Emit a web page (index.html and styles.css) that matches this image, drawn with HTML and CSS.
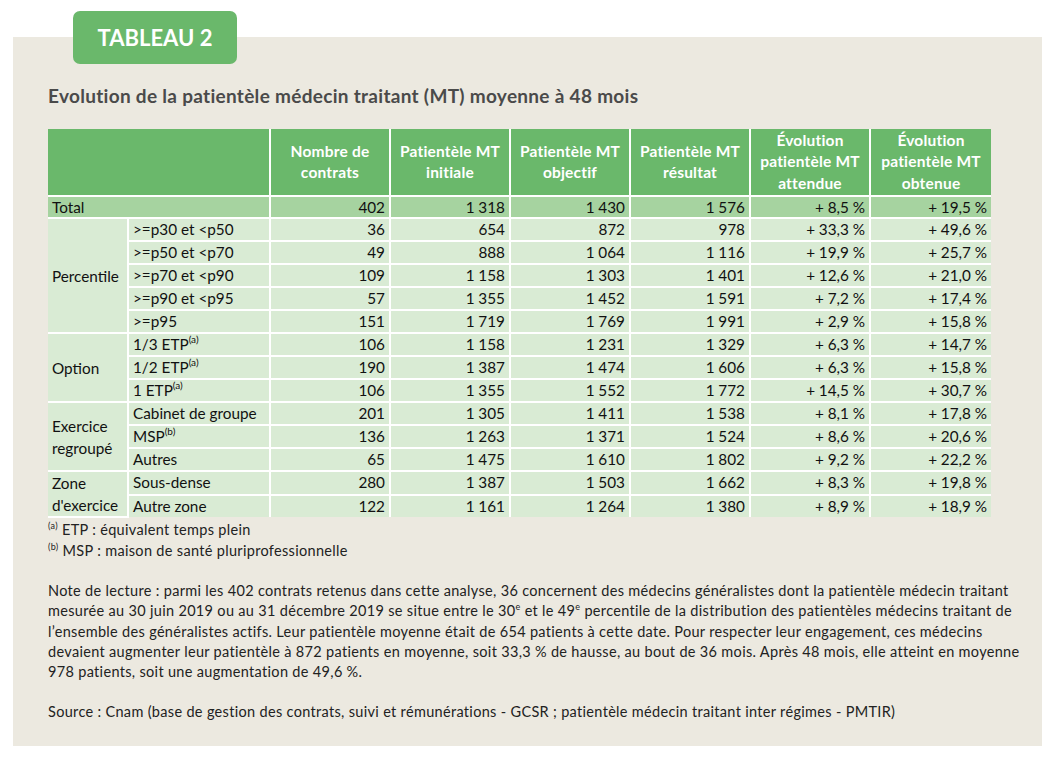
FILE: index.html
```html
<!DOCTYPE html>
<html lang="fr">
<head>
<meta charset="utf-8">
<title>Tableau 2</title>
<link rel="stylesheet" href="styles.css">
</head>
<body>
<div class="panel">
  <div class="tab">TABLEAU 2</div>
  <h1 class="title">Evolution de la patientèle médecin traitant (MT) moyenne à 48 mois</h1>
  <table class="data">
    <colgroup>
      <col class="c1"><col class="c2"><col class="cn"><col class="cn"><col class="cn"><col class="cn"><col class="cn"><col class="c8">
    </colgroup>
    <thead>
      <tr>
        <th colspan="2"></th>
        <th>Nombre de<br>contrats</th>
        <th>Patientèle MT<br>initiale</th>
        <th>Patientèle MT<br>objectif</th>
        <th>Patientèle MT<br>résultat</th>
        <th>Évolution<br>patientèle MT<br>attendue</th>
        <th>Évolution<br>patientèle MT<br>obtenue</th>
      </tr>
    </thead>
    <tbody>
      <tr class="total">
        <td colspan="2" class="lbl">Total</td>
        <td>402</td><td>1&#8239;318</td><td>1&#8239;430</td><td>1&#8239;576</td><td>+&#8239;8,5&#8239;%</td><td>+&#8239;19,5&#8239;%</td>
      </tr>
      <tr>
        <td rowspan="5" class="grp">Percentile</td>
        <td class="lbl">&gt;=p30 et &lt;p50</td>
        <td>36</td><td>654</td><td>872</td><td>978</td><td>+&#8239;33,3&#8239;%</td><td>+&#8239;49,6&#8239;%</td>
      </tr>
      <tr>
        <td class="lbl">&gt;=p50 et &lt;p70</td>
        <td>49</td><td>888</td><td>1&#8239;064</td><td>1&#8239;116</td><td>+&#8239;19,9&#8239;%</td><td>+&#8239;25,7&#8239;%</td>
      </tr>
      <tr>
        <td class="lbl">&gt;=p70 et &lt;p90</td>
        <td>109</td><td>1&#8239;158</td><td>1&#8239;303</td><td>1&#8239;401</td><td>+&#8239;12,6&#8239;%</td><td>+&#8239;21,0&#8239;%</td>
      </tr>
      <tr>
        <td class="lbl">&gt;=p90 et &lt;p95</td>
        <td>57</td><td>1&#8239;355</td><td>1&#8239;452</td><td>1&#8239;591</td><td>+&#8239;7,2&#8239;%</td><td>+&#8239;17,4&#8239;%</td>
      </tr>
      <tr>
        <td class="lbl">&gt;=p95</td>
        <td>151</td><td>1&#8239;719</td><td>1&#8239;769</td><td>1&#8239;991</td><td>+&#8239;2,9&#8239;%</td><td>+&#8239;15,8&#8239;%</td>
      </tr>
      <tr>
        <td rowspan="3" class="grp">Option</td>
        <td class="lbl">1/3 ETP<sup>(a)</sup></td>
        <td>106</td><td>1&#8239;158</td><td>1&#8239;231</td><td>1&#8239;329</td><td>+&#8239;6,3&#8239;%</td><td>+&#8239;14,7&#8239;%</td>
      </tr>
      <tr>
        <td class="lbl">1/2 ETP<sup>(a)</sup></td>
        <td>190</td><td>1&#8239;387</td><td>1&#8239;474</td><td>1&#8239;606</td><td>+&#8239;6,3&#8239;%</td><td>+&#8239;15,8&#8239;%</td>
      </tr>
      <tr>
        <td class="lbl">1 ETP<sup>(a)</sup></td>
        <td>106</td><td>1&#8239;355</td><td>1&#8239;552</td><td>1&#8239;772</td><td>+&#8239;14,5&#8239;%</td><td>+&#8239;30,7&#8239;%</td>
      </tr>
      <tr>
        <td rowspan="3" class="grp">Exercice regroupé</td>
        <td class="lbl">Cabinet de groupe</td>
        <td>201</td><td>1&#8239;305</td><td>1&#8239;411</td><td>1&#8239;538</td><td>+&#8239;8,1&#8239;%</td><td>+&#8239;17,8&#8239;%</td>
      </tr>
      <tr>
        <td class="lbl">MSP<sup>(b)</sup></td>
        <td>136</td><td>1&#8239;263</td><td>1&#8239;371</td><td>1&#8239;524</td><td>+&#8239;8,6&#8239;%</td><td>+&#8239;20,6&#8239;%</td>
      </tr>
      <tr>
        <td class="lbl">Autres</td>
        <td>65</td><td>1&#8239;475</td><td>1&#8239;610</td><td>1&#8239;802</td><td>+&#8239;9,2&#8239;%</td><td>+&#8239;22,2&#8239;%</td>
      </tr>
      <tr>
        <td rowspan="2" class="grp">Zone d'exercice</td>
        <td class="lbl">Sous-dense</td>
        <td>280</td><td>1&#8239;387</td><td>1&#8239;503</td><td>1&#8239;662</td><td>+&#8239;8,3&#8239;%</td><td>+&#8239;19,8&#8239;%</td>
      </tr>
      <tr>
        <td class="lbl">Autre zone</td>
        <td>122</td><td>1&#8239;161</td><td>1&#8239;264</td><td>1&#8239;380</td><td>+&#8239;8,9&#8239;%</td><td>+&#8239;18,9&#8239;%</td>
      </tr>
    </tbody>
  </table>
  <div class="notes">
    <p><sup>(a)</sup> ETP : équivalent temps plein</p>
    <p><sup>(b)</sup> MSP : maison de santé pluriprofessionnelle</p>
  </div>
  <p class="reading">Note de lecture : parmi les 402 contrats retenus dans cette analyse, 36 concernent des médecins généralistes dont la patientèle médecin traitant<br>mesurée au 30 juin 2019 ou au 31 décembre 2019 se situe entre le 30<sup>e</sup> et le 49<sup>e</sup> percentile de la distribution des patientèles médecins traitant de<br>l’ensemble des généralistes actifs. Leur patientèle moyenne était de 654 patients à cette date. Pour respecter leur engagement, ces médecins<br>devaient augmenter leur patientèle à 872 patients en moyenne, soit 33,3&#8239;% de hausse, au bout de 36 mois. Après 48 mois, elle atteint en moyenne<br>978 patients, soit une augmentation de 49,6&#8239;%.</p>
  <p class="source">Source : Cnam (base de gestion des contrats, suivi et rémunérations - GCSR ; patientèle médecin traitant inter régimes - PMTIR)</p>
</div>
</body>
</html>
```

FILE: styles.css
```css
html, body {
  margin: 0;
  padding: 0;
  background: #ffffff;
}

body {
  font-family: Lato, "Liberation Sans", sans-serif;
  color: #222;
}

.panel {
  position: relative;
  box-sizing: border-box;
  margin: 37px 0 0 13px;
  width: 1029px;
  height: 709px;
  background: #ece9e0;
  padding: 48px 0 0 35px;
}

.tab {
  position: absolute;
  left: 60px;
  top: -26px;
  width: 164px;
  height: 53px;
  border-radius: 7px;
  background: #6ab86b;
  color: #fff;
  font-weight: 700;
  font-size: 22px;
  display: flex;
  align-items: center;
  justify-content: center;
}

.title {
  margin: 0 0 22px;
  font-size: 19px;
  line-height: 22px;
  letter-spacing: 0.3px;
  font-weight: 700;
  color: #4a4a4a;
}

.data {
  width: 943px;
  table-layout: fixed;
  border-collapse: collapse;
  font-size: 15.3px;
  color: #111;
}

.c1 { width: 80px; }
.c2 { width: 142px; }
.cn { width: 120px; }
.c8 { width: 121px; }

.data th,
.data td {
  border: 2px solid #fff;
  padding: 0 4px;
}

.data tr > :first-child { border-left: none; }
.data tr > :last-child { border-right: none; }
.data thead th { border-top: none; }
.data tbody tr:last-child td { border-bottom: none; }

.data th {
  background: #6ab86b;
  color: #fff;
  font-weight: 700;
  font-size: 15.5px;
  letter-spacing: 0.2px;
  height: 66px;
  line-height: 21.5px;
  text-align: center;
  vertical-align: middle;
  padding: 0 2px;
}

.data td {
  background: #d9ebd4;
  height: 21px;
  line-height: 21px;
  text-align: right;
  white-space: nowrap;
}

.data tr.total td {
  background: #a6d3a0;
  height: 20px;
  line-height: 20px;
}

.data td.lbl,
.data td.grp {
  text-align: left;
}

.data td.grp {
  white-space: normal;
  vertical-align: middle;
  line-height: 22px;
}

.data tbody tr:last-child td.grp {
  vertical-align: top;
}

sup {
  font-size: 9px;
  line-height: 0;
  vertical-align: 6px;
}

.data sup {
  font-size: 10px;
  vertical-align: 7px;
}

.notes {
  margin-top: 1px;
  font-size: 14.5px;
  letter-spacing: 0.32px;
  line-height: 21px;
}

.notes p {
  margin: 0;
}

.reading {
  margin: 20px 0 0;
  font-size: 14.5px;
  letter-spacing: 0.32px;
  line-height: 20.3px;
  color: #222;
}

.source {
  margin: 20px 0 0;
  font-size: 14.5px;
  letter-spacing: 0.32px;
  line-height: 20px;
  color: #222;
}
```
